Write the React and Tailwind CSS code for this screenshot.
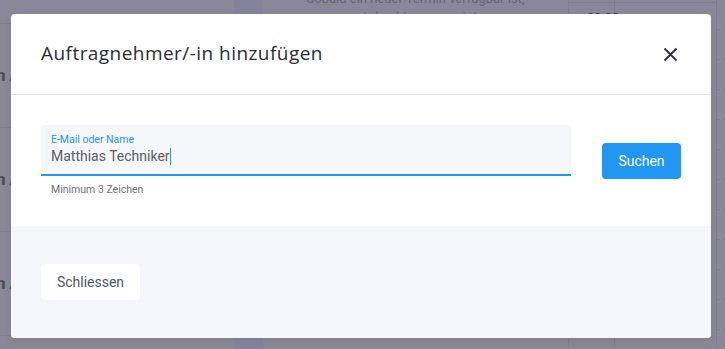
import React from "react";

function Background() {
  return (
    <div className="absolute inset-0 overflow-hidden bg-[#8a8898]">
      <div className="flex h-full">
        <div className="w-[234px] shrink-0 flex flex-col">
          <div className="h-[24px] shrink-0 border-b border-[#807e8f]" />
          {[0, 1, 2].map((i) => (
            <div key={i} className="h-[104px] shrink-0 border-b border-[#807e8f] flex items-center">
              <span className="ml-[-4px] text-[17px] font-bold text-[#4a4858] whitespace-nowrap" style={{ fontFamily: "Roboto, sans-serif" }}>n A</span>
            </div>
          ))}
        </div>
        <div className="w-[29px] shrink-0 bg-[#85839a]" />
        <div className="w-[306px] shrink-0 border-r border-[#7f7d8e] flex flex-col items-center text-[13px] leading-[16px] text-[#66647a]" style={{ fontFamily: "Roboto, sans-serif" }}>
          <div className="-mt-[9px]">Sobald ein neuer Termin verfügbar ist,</div>
          <div className="mt-[2px]">wird er hier angezeigt</div>
        </div>
        <div className="w-[46px] shrink-0 border-r border-[#7f7d8e]">
          <div className="h-[3px] border-b border-[#7f7d8e]" />
          <div className="text-[13px] text-[#3e3c4a] pl-[18px] pt-[5px]" style={{ fontFamily: "Roboto, sans-serif" }}>00:00</div>
        </div>
        <div className="w-[102px] shrink-0 border-r border-[#7f7d8e]">
          <div className="h-[3px] border-b border-[#7f7d8e]" />
        </div>
        <div className="flex-1 flex flex-col">
          {Array.from({ length: 12 }).map((_, i) => (
            <div key={i} className="h-[30px] shrink-0 border-b border-dashed border-[#7f7d8e]" />
          ))}
        </div>
      </div>
    </div>
  );
}

export default function App() {
  return (
    <div className="relative w-[725px] h-[349px] overflow-hidden" style={{ fontFamily: "Roboto, sans-serif" }}>
      <Background />
      <div className="absolute left-[11px] top-[14px] w-[700px] h-[324px] bg-white rounded-[4px] overflow-hidden flex flex-col shadow-[0_2px_8px_rgba(0,0,0,0.08)]">
        <div className="h-[81px] shrink-0 border-b border-[#dfe0ec] flex items-center justify-between pl-[30px] pr-[33px] pb-[1px]">
          <h2 className="text-[19px] text-[#2b2b36] tracking-[0.45px]" style={{ fontFamily: "'Open Sans', sans-serif", fontWeight: 500 }}>
            Auftragnehmer/-in hinzufügen
          </h2>
          <svg width="15" height="15" viewBox="0 0 15 15" className="mt-[1px]">
            <path d="M1.5 1.5L13.5 13.5M13.5 1.5L1.5 13.5" stroke="#2d2d3a" strokeWidth="1.8" />
          </svg>
        </div>
        <div className="h-[131px] shrink-0 flex items-start pt-[30px] pl-[30px] pr-[30px] gap-[31px]">
          <div className="flex flex-col w-[530px]">
            <div className="h-[51px] bg-[#f6f7f9] rounded-t-[4px] border-b-2 border-[#2196f3] px-[10px] pt-[9px] flex flex-col">
              <span className="text-[10.5px] leading-[12px] text-[#2196f3]">E-Mail oder Name</span>
              <span className="text-[14px] leading-[20px] text-[#5c5c68] flex items-center">
                Matthias Techniker<span className="inline-block w-[1px] h-[17px] bg-[#2196f3]" />
              </span>
            </div>
            <span className="text-[10.5px] leading-[13px] text-[#6f6f78] pl-[10px] pt-[7px]">Minimum 3 Zeichen</span>
          </div>
          <button className="mt-[18px] w-[79px] h-[36px] rounded-[4px] bg-[#2196f3] text-white text-[14px]">Suchen</button>
        </div>
        <div className="flex-1 bg-[#f5f6fa] pl-[30px] pt-[38px]">
          <button className="w-[99px] h-[36px] rounded-[4px] bg-white text-[#55555f] text-[14px]">Schliessen</button>
        </div>
      </div>
    </div>
  );
}
